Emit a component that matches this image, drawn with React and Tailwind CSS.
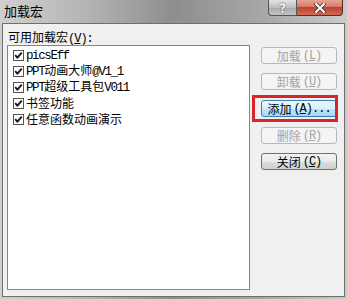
import React from 'react';

const items = ['picsEff', 'PPT动画大师@V1_1', 'PPT超级工具包V011', '书签功能', '任意函数动画演示'];

// latin runs get a narrower mono face, like SimSun's half-width glyphs
const mixed = (text) =>
    text.split(/([\x20-\x7e]+)/).filter(Boolean).map((part, i) =>
        /^[\x20-\x7e]+$/.test(part) ? (
            <span key={i} className="font-['Liberation_Mono'] text-[12.5px] tracking-[-1.4px]">{part}</span>
        ) : (
            <span key={i}>{part}</span>
        )
    );

const Check = () => (
    <span className="w-[11px] h-[11px] border border-[#555] bg-white flex items-center justify-center shrink-0">
        <svg width="9" height="9" viewBox="0 0 9 9">
            <path d="M1.2 4.2 L3.4 6.6 L7.8 1.6" fill="none" stroke="#111" strokeWidth="1.8" />
        </svg>
    </span>
);

const Btn = ({ label, hotkey, dots, kind, className }) => {
    const styles = {
        off: 'border-[#b5b9bc] bg-[#f4f4f4] text-[#a3a3a3]',
        hot: 'border-[#3c7fb1] bg-[linear-gradient(#eaf6fd,#d9f0fc_50%,#bee6fd_51%,#a7d9f5)] text-black',
        on: 'border-[#707070] bg-[linear-gradient(#f2f2f2,#ebebeb_50%,#dddddd_51%,#cfcfcf)] text-black',
    };
    return (
        <div className={`w-[76px] h-[17px] rounded-[3px] border flex items-center justify-center text-[12px] leading-none ${styles[kind]} ${className || ''}`}>
            <span>{label}</span>
            <span className="ml-[2px] font-['Liberation_Mono'] text-[12px] tracking-[-1px]">
                (<span className="underline">{hotkey}</span>){dots}
            </span>
        </div>
    );
};

const App = () => {
    return (
        <div className="relative w-[347px] h-[299px] flex flex-col bg-[linear-gradient(to_right,#cfcfcf,#b4b4b4_25%,#8e8e8e_50%,#a6a6a6_75%,#cbcbcb)] font-['Noto_Sans_CJK_SC',sans-serif] overflow-hidden">
            {/* TITLE BAR */}
            <div className="h-[23px] shrink-0 flex justify-between items-start pl-[4px] pr-[4px]">
                <span className="pt-[2px] text-[13px] text-black leading-[18px]">加载宏</span>
                <div className="flex">
                    <div className="w-[29px] h-[16px] border border-t-0 border-[#555] rounded-bl-[4px] bg-[linear-gradient(#e4e4e4,#bdbdbd_50%,#a9a9a9_51%,#c4c4c4)] flex items-center justify-center text-white text-[12px] font-bold leading-none [text-shadow:0_0_2px_#333]">
                        ?
                    </div>
                    <div className="w-[46px] h-[16px] border border-l-0 border-t-0 border-[#5e2a22] rounded-br-[4px] bg-[linear-gradient(#e8a493,#d47b68_45%,#c2412f_50%,#d06a55)] flex items-center justify-center">
                        <svg width="12" height="10" viewBox="0 0 12 10">
                            <path d="M2 1 L10 9 M10 1 L2 9" stroke="#333" strokeWidth="3.4" strokeLinecap="square" />
                            <path d="M2 1 L10 9 M10 1 L2 9" stroke="#fff" strokeWidth="2" strokeLinecap="square" />
                        </svg>
                    </div>
                </div>
            </div>

            {/* CONTENT */}
            <div className="flex-1 mx-[2px] mb-[2px] bg-[#f0f0f0] border border-[#6f6f6f] flex">
                <div className="flex flex-col">
                    <div className="pt-[6px] pl-[5px] h-[20px] text-[12px] leading-[14px] text-black">
                        可用加载宏<span className="font-['Liberation_Mono'] text-[12px] tracking-[-1px]">(<span className="underline">V</span>):</span>
                    </div>
                    <div className="ml-[4px] mt-[1px] w-[243px] h-[245px] border border-[#828790] bg-white pt-[1px]">
                        {items.map((it) => (
                            <div key={it} className="h-[16px] flex items-center pl-[5px] gap-[2px] text-[12px] text-black leading-none">
                                <Check />
                                <span className="whitespace-nowrap">{mixed(it)}</span>
                            </div>
                        ))}
                    </div>
                </div>

                <div className="ml-[11px] pt-[23px] flex flex-col">
                    <Btn label="加载" hotkey="L" kind="off" />
                    <Btn label="卸载" hotkey="U" kind="off" className="mt-[9px]" />
                    <Btn label="添加" hotkey="A" dots="..." kind="hot" className="mt-[10px]" />
                    <Btn label="删除" hotkey="R" kind="off" className="mt-[10px]" />
                    <Btn label="关闭" hotkey="C" kind="on" className="mt-[9px]" />
                </div>
            </div>

            {/* red highlight around 添加 */}
            <div className="absolute left-[252px] top-[95px] w-[86px] h-[27px] border-[3px] border-[#d7262b]" />
        </div>
    );
};

export default App;
